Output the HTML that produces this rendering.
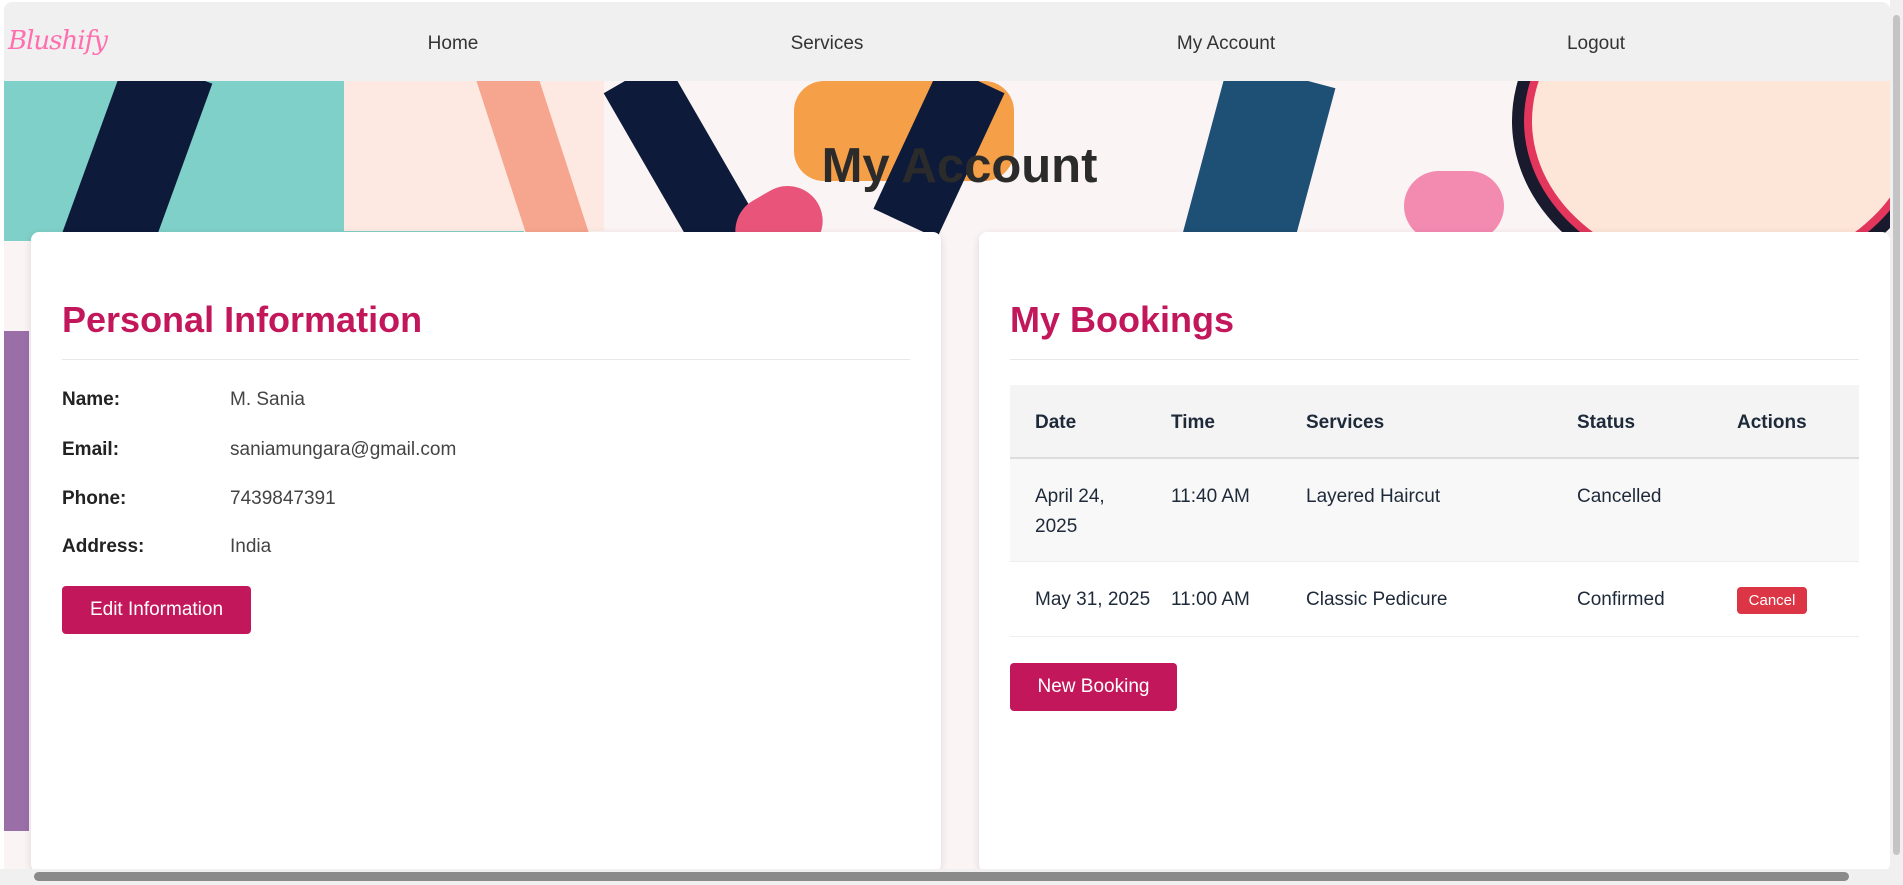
<!DOCTYPE html>
<html><head><style>
*{box-sizing:border-box;margin:0;padding:0}
body{width:1903px;height:885px;overflow:hidden;font-family:"Liberation Sans",Arial,sans-serif;background:#fff;position:relative}
.bg{position:absolute;left:4px;top:81px;width:1886px;height:790px;background:#fbf4f4;overflow:hidden}
.s{position:absolute}
nav{position:absolute;left:4px;top:2px;width:1886px;height:79px;background:#f0f0f0;border-radius:8px 8px 0 0}
.logo{position:absolute;left:4px;top:24px;font-family:"DejaVu Serif",serif;font-style:italic;font-size:26px;color:#ff6fb0;letter-spacing:-1px}
.nl{position:absolute;top:31px;font-size:19px;color:#333;transform:translateX(-50%)}
h1{position:absolute;left:8px;width:1903px;text-align:center;top:138px;font-size:49px;color:#2b2b2b;font-weight:bold}
.card{position:absolute;top:232px;height:640px;background:#fff;border-radius:8px;box-shadow:0 2px 8px rgba(0,0,0,.12)}
h2{position:absolute;left:31px;font-size:36px;color:#c2185b;font-weight:bold}
.hr{position:absolute;left:31px;right:31px;height:1px;background:#e8e8e8}
.lab{position:absolute;left:31px;font-size:19px;font-weight:bold;color:#222}
.val{position:absolute;left:200px;font-size:19px;color:#444}
.btn{position:absolute;background:#c2185b;color:#fff;font-size:19px;border-radius:4px;text-align:center}
.th,.td{position:absolute;font-size:19px;color:#1e2a3a}
.th{font-weight:bold}
</style></head><body>
<div class="bg">
<div class="s" style="left:0;top:0;width:520px;height:160px;background:#7fd0c8"></div>
<div class="s" style="left:80px;top:-20px;width:90px;height:240px;background:#0d1a3a;transform:rotate(20deg)"></div>
<div class="s" style="left:340px;top:0;width:260px;height:150px;background:#fde9e2"></div>
<div class="s" style="left:500px;top:-20px;width:60px;height:200px;background:#f6a58e;transform:rotate(-18deg)"></div>
<div class="s" style="left:650px;top:-20px;width:70px;height:220px;background:#0d1a3a;transform:rotate(-30deg)"></div>
<div class="s" style="left:730px;top:110px;width:90px;height:70px;background:#e9557a;border-radius:40px;transform:rotate(-30deg)"></div>
<div class="s" style="left:790px;top:0;width:220px;height:100px;background:#f59f48;border-radius:30px"></div>
<div class="s" style="left:900px;top:-10px;width:70px;height:160px;background:#0d1a3a;transform:rotate(25deg)"></div>
<div class="s" style="left:1200px;top:-10px;width:110px;height:180px;background:#1e4f74;transform:rotate(15deg)"></div>
<div class="s" style="left:1400px;top:90px;width:100px;height:70px;background:#f38bb1;border-radius:40px"></div>
<div class="s" style="left:1520px;top:-120px;width:400px;height:320px;border-radius:50%;background:#fde6d8;border:8px solid #e2365d;box-shadow:0 0 0 12px #1a1a2e"></div>
<div class="s" style="left:0;top:250px;width:25px;height:500px;background:#9a6fa8"></div>
</div>
<nav>
<div class="logo">Blushify</div>
<div class="nl" style="left:449px">Home</div>
<div class="nl" style="left:823px">Services</div>
<div class="nl" style="left:1222px">My Account</div>
<div class="nl" style="left:1592px">Logout</div>
</nav>
<h1>My Account</h1>
<div class="card" style="left:31px;width:910px">
<h2 style="top:67px">Personal Information</h2>
<div class="hr" style="top:127px"></div>
<div class="lab" style="top:157px">Name:</div><div class="val" style="left:199px;top:157px">M. Sania</div>
<div class="lab" style="top:207px">Email:</div><div class="val" style="left:199px;top:207px">saniamungara@gmail.com</div>
<div class="lab" style="top:256px">Phone:</div><div class="val" style="left:199px;top:256px">7439847391</div>
<div class="lab" style="top:304px">Address:</div><div class="val" style="left:199px;top:304px">India</div>
<div class="btn" style="left:31px;top:354px;width:189px;height:48px;line-height:48px">Edit Information</div>
</div>
<div class="card" style="left:979px;width:911px">
<h2 style="top:67px">My Bookings</h2>
<div class="hr" style="top:127px"></div>
<div class="s" style="left:31px;top:153px;width:849px;height:74px;background:#f4f4f4;border-bottom:2px solid #ddd"></div>
<div class="s" style="left:31px;top:227px;width:849px;height:103px;background:#f8f8f8;border-bottom:1px solid #eee"></div>
<div class="s" style="left:31px;top:330px;width:849px;height:75px;border-bottom:1px solid #eee"></div>
<div class="th" style="left:56px;top:180px">Date</div>
<div class="th" style="left:192px;top:180px">Time</div>
<div class="th" style="left:327px;top:180px">Services</div>
<div class="th" style="left:598px;top:180px">Status</div>
<div class="th" style="left:758px;top:180px">Actions</div>
<div class="td" style="left:56px;top:250px;line-height:30px">April 24,<br>2025</div>
<div class="td" style="left:192px;top:250px;line-height:30px">11:40 AM</div>
<div class="td" style="left:327px;top:250px;line-height:30px">Layered Haircut</div>
<div class="td" style="left:598px;top:250px;line-height:30px">Cancelled</div>
<div class="td" style="left:56px;top:353px;line-height:30px">May 31, 2025</div>
<div class="td" style="left:192px;top:353px;line-height:30px">11:00 AM</div>
<div class="td" style="left:327px;top:353px;line-height:30px">Classic Pedicure</div>
<div class="td" style="left:598px;top:353px;line-height:30px">Confirmed</div>
<div class="s" style="left:758px;top:355px;width:70px;height:27px;background:#dc3545;color:#fff;border-radius:4px;font-size:15px;text-align:center;line-height:27px">Cancel</div>
<div class="btn" style="left:31px;top:431px;width:167px;height:48px;line-height:48px">New Booking</div>
</div>
<div class="s" style="left:0;top:869px;width:1890px;height:16px;background:#f0f0f0"></div>
<div class="s" style="left:34px;top:872px;width:1815px;height:9px;background:#8a8a8a;border-radius:5px"></div>
<div class="s" style="left:1890px;top:0;width:13px;height:885px;background:#f0f0f0"></div>
<div class="s" style="left:1893px;top:15px;width:7px;height:840px;background:#c4c4c4;border-radius:4px"></div>
</body></html>
